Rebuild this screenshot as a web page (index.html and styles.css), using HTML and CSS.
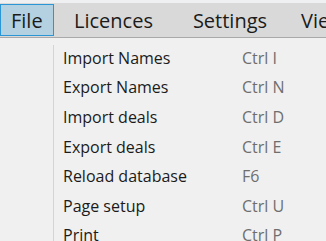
FILE: index.html
```html
<!DOCTYPE html>
<html lang="en">
<head>
  <meta charset="UTF-8" />
  <title>File menu</title>
  <link rel="stylesheet" href="styles.css">
</head>
<body>
  <div class="top-strip"></div>
  <nav class="menubar">
    <span class="menu-item active">File</span>
    <span class="menu-item">Licences</span>
    <span class="menu-item settings">Settings</span>
    <span class="menu-item">View</span>
  </nav>

  <div class="dropdown">
    <div class="gutter"></div>
    <ul class="entries">
      <li><span class="label">Import Names</span><span class="key">Ctrl I</span></li>
      <li><span class="label">Export Names</span><span class="key">Ctrl N</span></li>
      <li><span class="label">Import deals</span><span class="key">Ctrl D</span></li>
      <li><span class="label">Export deals</span><span class="key">Ctrl E</span></li>
      <li><span class="label">Reload database</span><span class="key">F6</span></li>
      <li><span class="label">Page setup</span><span class="key">Ctrl U</span></li>
      <li><span class="label">Print</span><span class="key">Ctrl P</span></li>
    </ul>
  </div>
</body>
</html>
```

FILE: styles.css
```css
body {
  margin: 0;
  width: 326px;
  height: 241px;
  overflow: hidden;
  background: #f0f0f0;
  font-family: 'Open Sans', 'Noto Sans', sans-serif;
  color: #1b1b1b;
}

.top-strip {
  height: 3px;
  background: #eef0f2;
}

.menubar {
  display: flex;
  height: 34px;
  background: #d9d9d9;
  border-bottom: 1px solid #a9a9a9;
  white-space: nowrap;
  overflow: hidden;
  font-size: 20px;
}

.menu-item {
  display: flex;
  align-items: center;
  padding: 0 20px;
  box-sizing: border-box;
  flex-shrink: 0;
}

.menu-item.settings {
  padding-right: 14px;
}

.menu-item.active {
  padding: 0 10px;
  width: 54px;
  margin-top: 1px;
  height: 32px;
  background: #b3d1e1;
  border: 1px solid #2a96d6;
}

.dropdown {
  display: flex;
  padding-top: 7px;
}

.gutter {
  width: 53px;
  border-right: 1px solid #d4d4d4;
}

.entries {
  list-style: none;
  margin: -2px 0 0;
  padding: 0 0 0 9px;
  font-size: 16px;
}

.entries li {
  display: flex;
  height: 29.6px;
  align-items: center;
  white-space: nowrap;
}

.label {
  width: 179px;
}

.key {
  color: #6e6e6e;
}
```
